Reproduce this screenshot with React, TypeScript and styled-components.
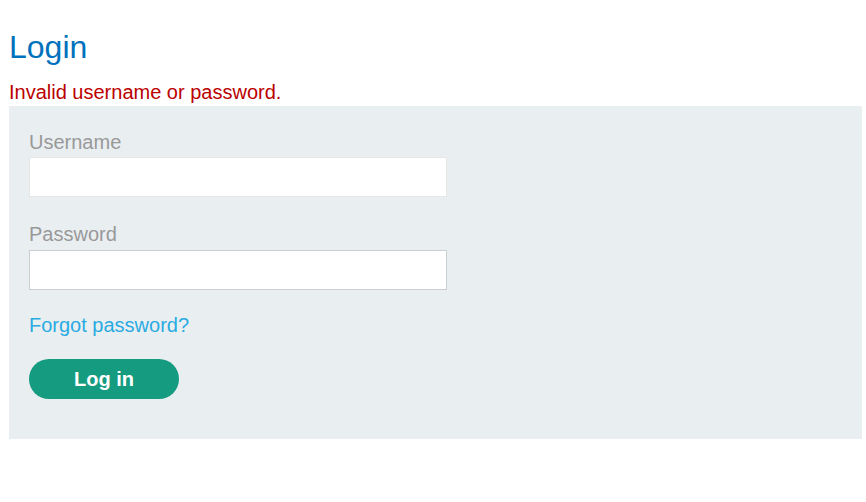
import React from "react";
import styled, { createGlobalStyle } from "styled-components";

const Global = createGlobalStyle`
  html, body { margin: 0; padding: 0; background: #fff; }
  body { font-family: "Liberation Sans", Arial, sans-serif; }
  * { box-sizing: border-box; }
`;

const Page = styled.main`
  display: flex;
  flex-direction: column;
  margin: 0 4px 0 9px;
`;

const Title = styled.h1`
  margin: 27px 0 0;
  font-size: 32px;
  line-height: 40px;
  font-weight: normal;
  color: #0071bc;
`;

const ErrorText = styled.p`
  margin: 13px 0 2px;
  font-size: 20px;
  line-height: 24px;
  color: #bb0000;
`;

const Panel = styled.section`
  display: flex;
  flex-direction: column;
  align-items: flex-start;
  background: #e9eef1;
  padding: 24px 20px 40px;
`;

const Field = styled.div<{ $gap: number; $after: number }>`
  display: flex;
  flex-direction: column;
  gap: ${(p) => p.$gap}px;
  margin-bottom: ${(p) => p.$after}px;
`;

const Label = styled.label`
  font-size: 20px;
  line-height: 24px;
  color: #999999;
`;

const Input = styled.input<{ $border: string }>`
  width: 418px;
  height: 40px;
  border: 1px solid ${(p) => p.$border};
  background: #fff;
  font-size: 16px;
  padding: 0 10px;
  outline: none;
`;

const Link = styled.a`
  font-size: 20px;
  line-height: 24px;
  color: #29abe2;
  text-decoration: none;
`;

const Button = styled.button`
  margin-top: 22px;
  width: 150px;
  height: 40px;
  border: none;
  border-radius: 20px;
  background: #159b7f;
  color: #fff;
  font-family: "Liberation Sans", Arial, sans-serif;
  font-size: 20px;
  font-weight: bold;
  cursor: pointer;
`;

export default function App() {
  return (
    <>
      <Global />
      <Page>
        <Title>Login</Title>
        <ErrorText>Invalid username or password.</ErrorText>
        <Panel>
          <Field $gap={3} $after={25}>
            <Label>Username</Label>
            <Input $border="#e6e6e6" type="text" />
          </Field>
          <Field $gap={4} $after={23}>
            <Label>Password</Label>
            <Input $border="#cbcfd2" type="password" />
          </Field>
          <Link href="#">Forgot password?</Link>
          <Button>Log in</Button>
        </Panel>
      </Page>
    </>
  );
}
